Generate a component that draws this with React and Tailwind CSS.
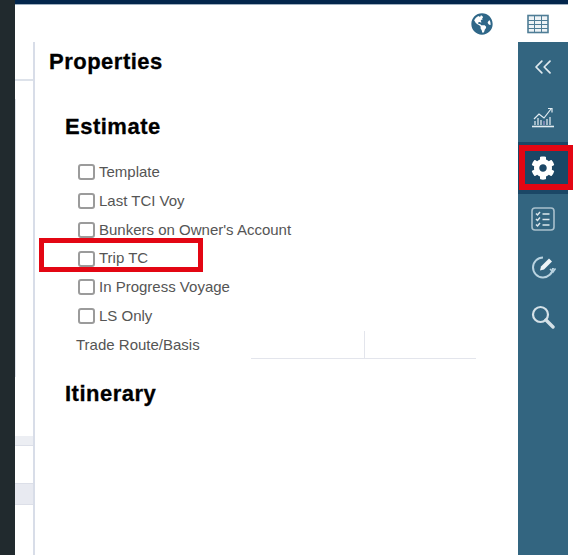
import React from 'react';
import { ChevronsLeft } from 'lucide-react';
import { FaCog, FaGlobeAmericas } from 'react-icons/fa';

const options = ['Template', 'Last TCI Voy', "Bunkers on Owner's Account", 'Trip TC', 'In Progress Voyage', 'LS Only'];

const GridIcon = () => (
  <svg width="22" height="20" viewBox="0 0 22 20" fill="none" stroke="#4f7d96" strokeWidth="1">
    <rect x="1" y="1.5" width="20" height="17" fill="#eef3f6" strokeWidth="1.6" />
    <path d="M1 6.5h20M1 10.5h20M1 14.5h20M7.5 1.5v17M14.5 1.5v17" />
  </svg>
);

const ChartIcon = () => (
  <svg width="24" height="22" viewBox="0 0 24 22" fill="none" stroke="#e4edf2" strokeWidth="1.2">
    <path d="M1 20.5h22" strokeWidth="1.6" />
    <path d="M3 13l5-5 5 4 7-9" />
    <path d="M17 2.5h4v4" />
    <path d="M4 19v-4M7 19v-7M10 19v-5M16 19v-6M19 19v-8" />
    <path d="M13 19v-4" stroke="#a99bd0" />
  </svg>
);

const ChecklistIcon = () => (
  <svg width="24" height="24" viewBox="0 0 24 24" fill="none" stroke="#dce7ec" strokeWidth="1.5">
    <rect x="1" y="1" width="22" height="22" rx="3" stroke="#a9c0cc" strokeWidth="1.6" />
    <path d="M5 6.5l1.5 1.5L9 5M5 12l1.5 1.5L9 10.5M5 17.5l1.5 1.5L9 16" />
    <path d="M11.5 7h7M11.5 12.5h7M11.5 18h7" />
  </svg>
);

const ProgressIcon = () => (
  <svg width="26" height="26" viewBox="0 0 26 26" fill="none">
    <path d="M13 3.5A10 10 0 1 0 23 14" stroke="#b9d3e0" strokeWidth="2" />
    <path d="M20 15l3 3 2.5-3.5" stroke="#b9d3e0" strokeWidth="1.6" />
    <path d="M10 16.5l1-4L19 4.5l3 3-8 8z" fill="#eef4f7" />
  </svg>
);

const SearchIcon = () => (
  <svg width="24" height="24" viewBox="0 0 24 24" fill="none" stroke="#d5e1e7">
    <circle cx="9.5" cy="9.5" r="7.5" strokeWidth="2.2" />
    <path d="M15 15l7 7" strokeWidth="3.4" strokeLinecap="round" />
  </svg>
);

const headingClass = "text-[22px] font-bold leading-[26px] tracking-[0.5px] text-black [-webkit-text-stroke:0.3px_black]";

export default function App() {
  return (
    <div className="relative flex h-[555px] w-[573px] overflow-hidden bg-white font-['Liberation_Sans',Arial,sans-serif]">
      <div className="w-[15px] shrink-0 bg-[#212a2e]" />

      <div className="flex min-w-0 flex-1 flex-col">
        <div className="mr-[5px] h-[5px] shrink-0 border-b border-[#9fb0c0] bg-[#03264c]" />

        {/* toolbar */}
        <div className="flex h-[37px] shrink-0 items-center justify-end pr-[24px]">
          <FaGlobeAmericas className="mr-[34px] text-[#2f6788]" size={22} />
          <GridIcon />
        </div>

        <div className="flex min-h-0 flex-1">
          {/* grid peeking out behind the panel */}
          <div className="flex w-[20px] shrink-0 flex-col border-r-2 border-[#d8dde8]">
            <div className="h-[39px] border-b-2 border-[#dde2ea]" />
            <div className="mt-[18px] h-[278px] w-px bg-[#dfe3ea]" />
            <div className="mt-[59px] h-[10px] border-b border-[#dcdfe8] bg-[#eceef3]" />
            <div className="mt-[37px] h-[22px] border-y border-[#dcdfe8] bg-[#e8eaf1]" />
          </div>

          {/* properties panel */}
          <div className="min-w-0 flex-1 pl-[14px]">
            <h2 className={`mt-[7px] ${headingClass}`}>Properties</h2>
            <div className="pl-[16px]">
              <h3 className={`mt-[39px] ${headingClass}`}>Estimate</h3>
              <div className="mt-[18px] pl-[13px]">
                {options.map((option) => (
                  <label key={option} className="flex h-[28.75px] items-center text-[15px] text-[#555]">
                    <span className="mr-[4px] h-[16px] w-[17px] rounded-[3px] border-2 border-[#9b9b9b] bg-white" />
                    {option}
                  </label>
                ))}
              </div>
              <div className="flex pl-[11px]">
                <span className="w-[175px] pt-[6px] text-[15px] leading-[16px] text-[#555]">Trade Route/Basis</span>
                <div className="h-[28px] w-[114px] border-b border-r border-[#e3e5ec]" />
                <div className="h-[28px] w-[111px] border-b border-[#e3e5ec]" />
              </div>
              <h3 className={`mt-[22px] ${headingClass}`}>Itinerary</h3>
            </div>
          </div>

          {/* side rail */}
          <div className="mr-[5px] flex w-[50px] shrink-0 flex-col items-center bg-[#336580]">
            <div className="flex h-[50px] items-center justify-center">
              <ChevronsLeft className="text-[#dfe9ee]" size={28} strokeWidth={1.5} />
            </div>
            <div className="flex h-[50px] items-center justify-center">
              <ChartIcon />
            </div>
            <div className="flex h-[52px] w-full items-center justify-center bg-[#1b4766]">
              <FaCog className="text-white" size={24} />
            </div>
            <div className="flex h-[50px] items-center justify-center">
              <ChecklistIcon />
            </div>
            <div className="flex h-[46px] items-center justify-center">
              <ProgressIcon />
            </div>
            <div className="flex h-[54px] items-center justify-center">
              <SearchIcon />
            </div>
          </div>
        </div>
      </div>

      {/* red annotation boxes */}
      <div className="absolute left-[39px] top-[238px] h-[34px] w-[164px] border-[5px] border-[#e30613]" />
      <div className="absolute left-[519px] top-[145px] h-[45px] w-[54px] border-[6px] border-r-[5px] border-[#e30613]" />
    </div>
  );
}
